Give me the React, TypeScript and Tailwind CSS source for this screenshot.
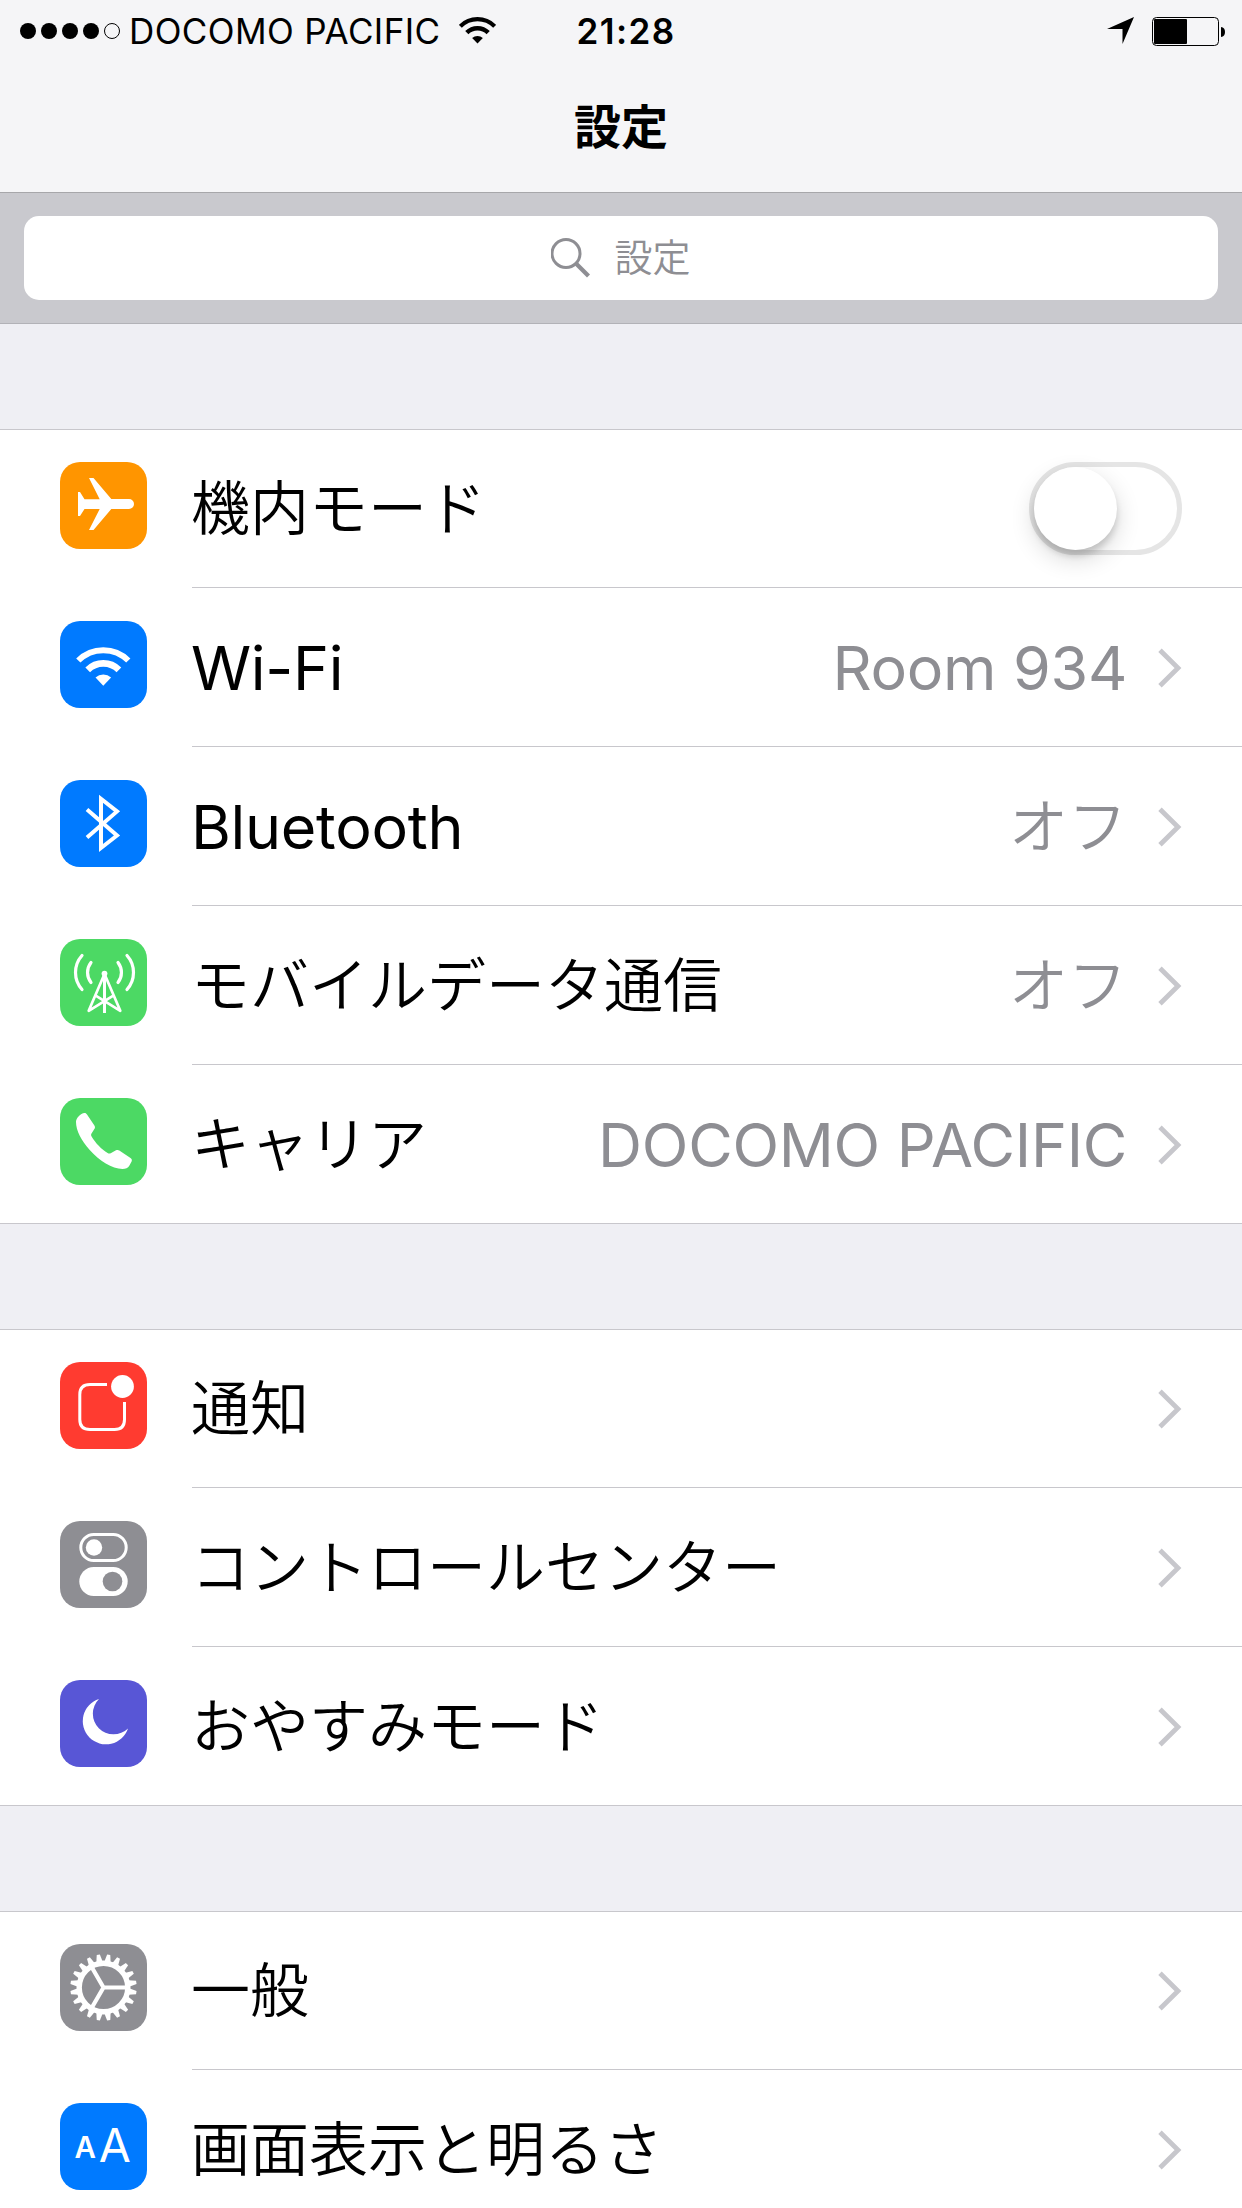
import type { ReactNode } from "react"

const TEETH = Array.from({ length: 20 }, (_, i) => i * 18 + 9)

function WifiGlyph({ color = "#fff", className = "w-[87px] h-[87px]", viewBox = "0 0 87 87" }) {
  return (
    <svg className={className} viewBox={viewBox} fill="none" stroke={color}>
      <path d="M18.3 39.5A35.4 35.4 0 0 1 68.3 39.5" strokeWidth="6" />
      <path d="M27.7 48.9A22 22 0 0 1 58.9 48.9" strokeWidth="6.6" />
      <path d="M43.3 64.7L35.5 56.6A11.5 11.5 0 0 1 51.1 56.6Z" fill={color} stroke="none" />
    </svg>
  )
}

function Glyph({ children }: { children: ReactNode }) {
  return (
    <svg className="w-[87px] h-[87px]" viewBox="0 0 87 87" fill="none">
      {children}
    </svg>
  )
}

function Airplane() {
  return (
    <Glyph>
      <path
        fill="#fff"
        d="M18 30H20L24.5 37.2H39.7L29 16H33.5L51.3 37H69A5 5 0 0 1 69 47H51.3L33.5 68H29L39.7 47H24.5L20 54H18Z"
      />
    </Glyph>
  )
}

function Bluetooth() {
  return (
    <Glyph>
      <path stroke="#fff" strokeWidth="4" d="M27 29.5L57 55.5L41 68V18.8L57 31.4L27 57.5" />
    </Glyph>
  )
}

function Antenna() {
  return (
    <Glyph>
      <g stroke="#fff" strokeWidth="3.2" strokeLinecap="round">
        <path d="M22 16.5A25.5 25.5 0 0 0 22 50.5M67 16.5A25.5 25.5 0 0 1 67 50.5" />
        <path d="M31 23.4A16.5 16.5 0 0 0 31 43.6M58 23.4A16.5 16.5 0 0 1 58 43.6" />
      </g>
      <g stroke="#fff" strokeWidth="2.7" strokeLinejoin="round" strokeLinecap="round">
        <path d="M44.5 35L28.7 71.8L53.3 56.6M44.5 35L60.3 71.8L35.7 56.6" />
      </g>
      <path d="M44.5 35V74" stroke="#fff" strokeWidth="3" />
      <circle cx="44.5" cy="34.6" r="2.9" fill="#fff" />
    </Glyph>
  )
}

function Phone() {
  return (
    <Glyph>
      <path
        fill="#fff"
        d="M16 24C16 20 20.5 15.5 24.5 15C25.6 14.9 26.4 15.6 27 16.6L34.4 27.4C35.2 28.7 35.1 29.8 34.5 30.8L31.5 35.5C30.9 36.6 31 37.4 31.6 38.4C35.5 45 41.5 51.2 47.6 55C48.6 55.7 49.6 55.8 50.7 55.2L56 52.3C57.2 51.7 58.3 51.8 59.3 52.5L70.5 60C71.8 60.9 72.2 62 71.6 63.4L69.3 67.8C68 70.2 65.5 71 62.5 71C52 70.8 39.5 63 29.5 51.8C21.5 42.8 16 32.5 16 24Z"
      />
    </Glyph>
  )
}

function Notification() {
  return (
    <Glyph>
      <path
        stroke="#fff"
        strokeWidth="3"
        d="M47 22.5H30Q19.8 22.5 19.8 32.5V57.5Q19.8 67.5 30 67.5H54.5Q64.5 67.5 64.5 57.5V40"
      />
      <circle cx="62.5" cy="24.5" r="11.4" fill="#fff" />
    </Glyph>
  )
}

function Toggles() {
  return (
    <Glyph>
      <rect x="20.8" y="13.5" width="45.4" height="26" rx="13" stroke="#fff" strokeWidth="3" />
      <circle cx="34" cy="26.5" r="8.2" fill="#fff" />
      <rect x="19.3" y="46" width="48.4" height="29" rx="14.5" fill="#fff" />
      <circle cx="52.5" cy="60.5" r="9.8" fill="#8e8e93" />
    </Glyph>
  )
}

function Moon() {
  return (
    <Glyph>
      <path fill="#fff" d="M39 19A23.2 23.2 0 1 0 68 48.4A20.3 20.3 0 0 1 39 19Z" />
    </Glyph>
  )
}

function Gear() {
  return (
    <Glyph>
      <circle cx="43.5" cy="43.5" r="24.3" stroke="#fff" strokeWidth="5.4" />
      {TEETH.map((angle) => (
        <path
          key={angle}
          fill="#fff"
          d="M40.3 18L41.9 10.3H45.1L46.7 18Z"
          transform={`rotate(${angle} 43.5 43.5)`}
        />
      ))}
      <path stroke="#fff" strokeWidth="4.2" d="M43.5 43.5H66M43.5 43.5L32.2 24M43.5 43.5L32.2 63" />
    </Glyph>
  )
}

function TextSize() {
  return (
    <Glyph>
      <text x="14.6" y="54.7" fill="#fff" fontSize="29.5" fontWeight="600" fontFamily="Inter, sans-serif">
        A
      </text>
      <text x="38.8" y="59" fill="#fff" fontSize="46.5" fontWeight="400" fontFamily="Inter, sans-serif">
        A
      </text>
    </Glyph>
  )
}

function Switch() {
  return (
    <div className="w-[153px] h-[93px] mt-[1px] rounded-full border-[5px] border-[#e5e5e5]">
      <div className="w-[83px] h-[83px] rounded-full bg-white shadow-[0_9px_24px_rgba(0,0,0,0.16),0_6px_6px_rgba(0,0,0,0.14)]" />
    </div>
  )
}

function Chevron() {
  return (
    <svg className="w-[24px] h-[40px] mt-[1px] ml-[31px]" viewBox="0 0 24 40" fill="none">
      <path d="M2 2.2L20 20L2 37.8" stroke="#c7c7cc" strokeWidth="4.8" />
    </svg>
  )
}

type Item = {
  label: string
  color: string
  icon: ReactNode
  value?: string
  latin?: boolean
  latinValue?: boolean
  toggle?: boolean
}

const sections: Item[][] = [
  [
    { label: "機内モード", color: "bg-[#ff9500]", icon: <Airplane />, toggle: true },
    { label: "Wi-Fi", color: "bg-[#007aff]", icon: <WifiGlyph />, value: "Room 934", latin: true, latinValue: true },
    { label: "Bluetooth", color: "bg-[#007aff]", icon: <Bluetooth />, value: "オフ", latin: true },
    { label: "モバイルデータ通信", color: "bg-[#4cd964]", icon: <Antenna />, value: "オフ" },
    { label: "キャリア", color: "bg-[#4cd964]", icon: <Phone />, value: "DOCOMO PACIFIC", latinValue: true },
  ],
  [
    { label: "通知", color: "bg-[#ff3b30]", icon: <Notification /> },
    { label: "コントロールセンター", color: "bg-[#8e8e93]", icon: <Toggles /> },
    { label: "おやすみモード", color: "bg-[#5856d6]", icon: <Moon /> },
  ],
  [
    { label: "一般", color: "bg-[#8e8e93]", icon: <Gear /> },
    { label: "画面表示と明るさ", color: "bg-[#007aff]", icon: <TextSize /> },
  ],
]

const latinText = "font-['Inter',sans-serif] text-[61px] tracking-[-0.3px] pt-[3px]"
const kanaText = "font-['Noto_Sans_CJK_JP',sans-serif] font-[350] text-[59px] pb-[7px]"

function Row({ item, last }: { item: Item; last: boolean }) {
  return (
    <li className={`flex h-[159px] pl-[60px] ${last ? "border-b border-[#c8c7cc]" : ""}`}>
      <div className={`w-[87px] h-[87px] mt-[33px] shrink-0 rounded-[20px] ${item.color}`}>{item.icon}</div>
      <div
        className={`flex flex-1 items-center ml-[45px] pr-[60px] whitespace-nowrap leading-none ${
          last ? "" : "border-b border-[#c8c7cc]"
        }`}
      >
        <span className={`flex-1 -ml-[1px] text-black ${item.latin ? latinText : kanaText}`}>{item.label}</span>
        {item.value && (
          <span className={`text-[#8e8e93] ${item.latinValue ? latinText : kanaText}`}>{item.value}</span>
        )}
        {item.toggle ? <Switch /> : <Chevron />}
      </div>
    </li>
  )
}

function StatusBar() {
  return (
    <div className="grid grid-cols-[1fr_auto_1fr] items-center h-[62px] pl-[20px] pr-[16px] font-['Inter',sans-serif] text-[35px] leading-none">
      <div className="flex items-center">
        <div className="flex gap-[5px]">
          <i className="w-[16px] h-[16px] rounded-full bg-black" />
          <i className="w-[16px] h-[16px] rounded-full bg-black" />
          <i className="w-[16px] h-[16px] rounded-full bg-black" />
          <i className="w-[16px] h-[16px] rounded-full bg-black" />
          <i className="w-[16px] h-[16px] rounded-full border border-black" />
        </div>
        <span className="ml-[9px] tracking-[0.4px] whitespace-nowrap">DOCOMO PACIFIC</span>
        <WifiGlyph color="#000" className="w-[37px] h-[27px] mb-[2px] ml-[18px]" viewBox="16.3 26 54 39.4" />
      </div>
      <span className="pl-[6px] font-semibold tracking-[1.4px]">21:28</span>
      <div className="flex items-center justify-end">
        <svg className="w-[28px] h-[28px]" viewBox="0 0 28 28">
          <path d="M27 0L15.5 27V12H0Z" />
        </svg>
        <svg className="w-[74px] h-[29px] ml-[17px]" viewBox="0 0 74 29">
          <rect x="0.5" y="0.5" width="66" height="28" rx="4" fill="none" stroke="#000" />
          <rect x="2" y="2" width="33" height="25" rx="1" />
          <path d="M69 10Q73 10.5 73 15T69 20Z" />
        </svg>
      </div>
    </div>
  )
}

export default function App() {
  return (
    <div className="w-[1242px] h-[2208px] overflow-hidden bg-[#efeff4] text-black">
      <header className="h-[193px] bg-[#f5f5f7] border-b border-[#a7a7aa]">
        <StatusBar />
        <h1 className="pt-[38px] text-center font-['Noto_Sans_CJK_JP',sans-serif] font-bold text-[47px] leading-none">
          設定
        </h1>
      </header>
      <div className="h-[131px] px-[24px] pt-[23px] bg-[#c9c9ce] border-b border-[#b2b2b7]">
        <div className="flex items-center justify-center h-[84px] rounded-[15px] bg-white text-[#8e8e93]">
          <svg className="w-[40px] h-[40px]" viewBox="0 0 40 40" fill="none" stroke="currentColor">
            <circle cx="15" cy="15.5" r="14" strokeWidth="3" />
            <path d="M25 25.5L37.5 38" strokeWidth="4.2" />
          </svg>
          <span className="pb-[6px] ml-[23px] font-['Noto_Sans_CJK_JP',sans-serif] font-[350] text-[38px] leading-none">
            設定
          </span>
        </div>
      </div>
      <main className="flex flex-col gap-[105px] pt-[105px]">
        {sections.map((items, i) => (
          <ul key={i} className="bg-white shadow-[inset_0_1px_0_#c8c7cc]">
            {items.map((item, j) => (
              <Row key={item.label} item={item} last={i < 2 && j === items.length - 1} />
            ))}
          </ul>
        ))}
      </main>
    </div>
  )
}
